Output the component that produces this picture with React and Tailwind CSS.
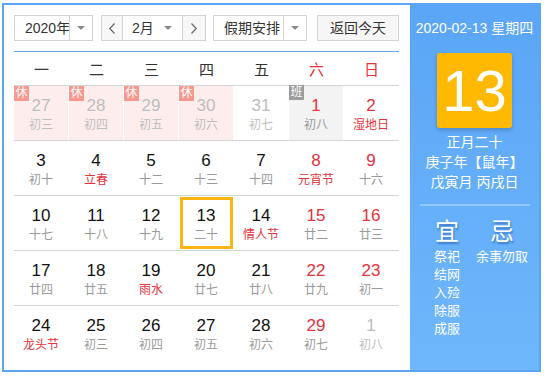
import React from 'react';

const R = 'text-[#e5323b]';
const G = 'text-[#999]';
const L = 'text-[#bdbdbd]';
const K = 'text-[#111]';

const weeks = [
  [
    { d: 27, l: '初三', n: L, c: L, bg: 'pink', b: '休' },
    { d: 28, l: '初四', n: L, c: L, bg: 'pink', b: '休' },
    { d: 29, l: '初五', n: L, c: L, bg: 'pink', b: '休' },
    { d: 30, l: '初六', n: L, c: L, bg: 'pink', b: '休' },
    { d: 31, l: '初七', n: L, c: L },
    { d: 1, l: '初八', n: R, c: G, bg: 'gray', b: '班' },
    { d: 2, l: '湿地日', n: R, c: R },
  ],
  [
    { d: 3, l: '初十', n: K, c: G },
    { d: 4, l: '立春', n: K, c: R },
    { d: 5, l: '十二', n: K, c: G },
    { d: 6, l: '十三', n: K, c: G },
    { d: 7, l: '十四', n: K, c: G },
    { d: 8, l: '元宵节', n: R, c: R },
    { d: 9, l: '十六', n: R, c: G },
  ],
  [
    { d: 10, l: '十七', n: K, c: G },
    { d: 11, l: '十八', n: K, c: G },
    { d: 12, l: '十九', n: K, c: G },
    { d: 13, l: '二十', n: K, c: G, sel: true },
    { d: 14, l: '情人节', n: K, c: R },
    { d: 15, l: '廿二', n: R, c: G },
    { d: 16, l: '廿三', n: R, c: G },
  ],
  [
    { d: 17, l: '廿四', n: K, c: G },
    { d: 18, l: '廿五', n: K, c: G },
    { d: 19, l: '雨水', n: K, c: R },
    { d: 20, l: '廿七', n: K, c: G },
    { d: 21, l: '廿八', n: K, c: G },
    { d: 22, l: '廿九', n: R, c: G },
    { d: 23, l: '初一', n: R, c: G },
  ],
  [
    { d: 24, l: '龙头节', n: K, c: R },
    { d: 25, l: '初三', n: K, c: G },
    { d: 26, l: '初四', n: K, c: G },
    { d: 27, l: '初五', n: K, c: G },
    { d: 28, l: '初六', n: K, c: G },
    { d: 29, l: '初七', n: R, c: G },
    { d: 1, l: '初八', n: L, c: L },
  ],
];

function Caret() {
  return (
    <span className="block w-0 h-0 border-l-[4px] border-r-[4px] border-t-[4px] border-l-transparent border-r-transparent border-t-[#8a8a8a]" />
  );
}

function Chev({ dir }) {
  return (
    <svg width="6" height="11" viewBox="0 0 6 11" fill="none" stroke="#666" strokeWidth="1.2">
      {dir === 'left' ? <polyline points="5.5,0.5 0.8,5.5 5.5,10.5" /> : <polyline points="0.5,0.5 5.2,5.5 0.5,10.5" />}
    </svg>
  );
}

function Cell({ d, l, n, c, bg, b, sel }) {
  const bgc = bg === 'pink' ? 'bg-[#fdeeed]' : bg === 'gray' ? 'bg-[#f3f3f3]' : '';
  return (
    <div className="w-[55px] h-[54px] pr-[1px]">
      <div className={`relative h-full flex flex-col items-center pt-[10px] ${bgc}`}>
        {b && (
          <span
            className={`absolute left-0 top-0 w-[15px] h-[15px] text-[12px] leading-[15px] text-white text-center ${
              b === '休' ? 'bg-[#f7998f]' : 'bg-[#9c9c9c] top-[-1px]'
            }`}
          >
            {b}
          </span>
        )}
        {sel && <span className="absolute left-[1px] right-0 top-[1px] bottom-[1px] border-[3px] border-[#fbb612]" />}
        <span className={`text-[17px] leading-[20px] ${n}`}>{d}</span>
        <span className={`text-[12px] leading-[18px] whitespace-nowrap ${c}`}>{l}</span>
      </div>
    </div>
  );
}

export default function App() {
  const heads = ['一', '二', '三', '四', '五', '六', '日'];
  return (
    <div className="w-[544px] h-[376px] bg-white pt-[3px] pl-[2px] font-['Liberation_Sans','Noto_Sans_CJK_SC',sans-serif]">
      <div className="w-[539px] h-[369px] border-2 border-[#5aa5f5] flex">
        <div className="w-[406px] pl-[10px] pt-[10px]">
          <div className="flex h-[26px] text-[14px] text-[#333] whitespace-nowrap">
            <div className="flex w-[79px] border border-[#d2d2d2]">
              <div className="w-[54px] pl-[10px] leading-[24px] overflow-visible">2020年</div>
              <div className="flex-1 border-l border-[#d2d2d2] flex items-center justify-center">
                <Caret />
              </div>
            </div>
            <div className="ml-[8px] flex w-[105px] border border-[#d2d2d2]">
              <div className="w-[21px] bg-[#f7f7f7] border-r border-[#d2d2d2] flex items-center justify-center">
                <Chev dir="left" />
              </div>
              <div className="w-[59px] flex items-center justify-between pl-[9px] pr-[10px]">
                <span className="leading-[24px]">2月</span>
                <Caret />
              </div>
              <div className="flex-1 bg-[#f7f7f7] border-l border-[#d2d2d2] flex items-center justify-center">
                <Chev dir="right" />
              </div>
            </div>
            <div className="ml-[7px] flex w-[94px] border border-[#d2d2d2]">
              <div className="w-[69px] pl-[10px] leading-[24px]">假期安排</div>
              <div className="flex-1 border-l border-[#d2d2d2] flex items-center justify-center">
                <Caret />
              </div>
            </div>
            <div className="ml-[10px] w-[82px] border border-[#d2d2d2] bg-[#f6f6f6] flex items-center justify-center leading-[24px]">
              返回今天
            </div>
          </div>
          <div className="w-[385px] h-px bg-[#5aa5f5] mt-[10px]" />
          <div className="flex w-[385px] h-[33px] pt-[3px] items-center text-[15px] text-[#333]">
            {heads.map((h, i) => (
              <div key={h} className={`w-[55px] text-center ${i >= 5 ? 'text-[#e5323b]' : ''}`}>
                {h}
              </div>
            ))}
          </div>
          {weeks.map((w, i) => (
            <div key={i} className="flex w-[385px] border-t border-[#d4d4d4]">
              {w.map((c, j) => (
                <Cell key={j} {...c} />
              ))}
            </div>
          ))}
        </div>
        <div className="flex-1 bg-linear-to-b from-[#5aa5f6] to-[#6fb7fc] text-white flex flex-col items-center">
          <div className="pt-[13px] text-[14px] leading-[20px] whitespace-nowrap">2020-02-13 星期四</div>
          <div className="mt-[15px] w-[75px] h-[75px] bg-[#ffb900] rounded-[3px] shadow-[0_2px_4px_rgba(0,0,0,0.2)] flex items-center justify-center text-[58px] leading-none">
            13
          </div>
          <div className="mt-[4px] text-[14px] leading-[20px] text-center whitespace-nowrap">
            <div>正月二十</div>
            <div>庚子年【鼠年】</div>
            <div>戊寅月 丙戌日</div>
          </div>
          <div className="mt-[12px] w-[110px] h-[2px] bg-white/30" />
          <div className="mt-[10px] flex w-[110px]">
            <div className="w-[55px] flex flex-col items-center">
              <div className="text-[24px] leading-[32px] [text-shadow:1px_2px_2px_rgba(30,80,160,0.6)]">宜</div>
              <div className="text-[13px] leading-[18px] text-center">
                <div>祭祀</div>
                <div>结网</div>
                <div>入殓</div>
                <div>除服</div>
                <div>成服</div>
              </div>
            </div>
            <div className="w-[55px] flex flex-col items-center">
              <div className="text-[24px] leading-[32px] [text-shadow:1px_2px_2px_rgba(30,80,160,0.6)]">忌</div>
              <div className="text-[13px] leading-[18px] text-center whitespace-nowrap">
                <div>余事勿取</div>
              </div>
            </div>
          </div>
        </div>
      </div>
    </div>
  );
}
